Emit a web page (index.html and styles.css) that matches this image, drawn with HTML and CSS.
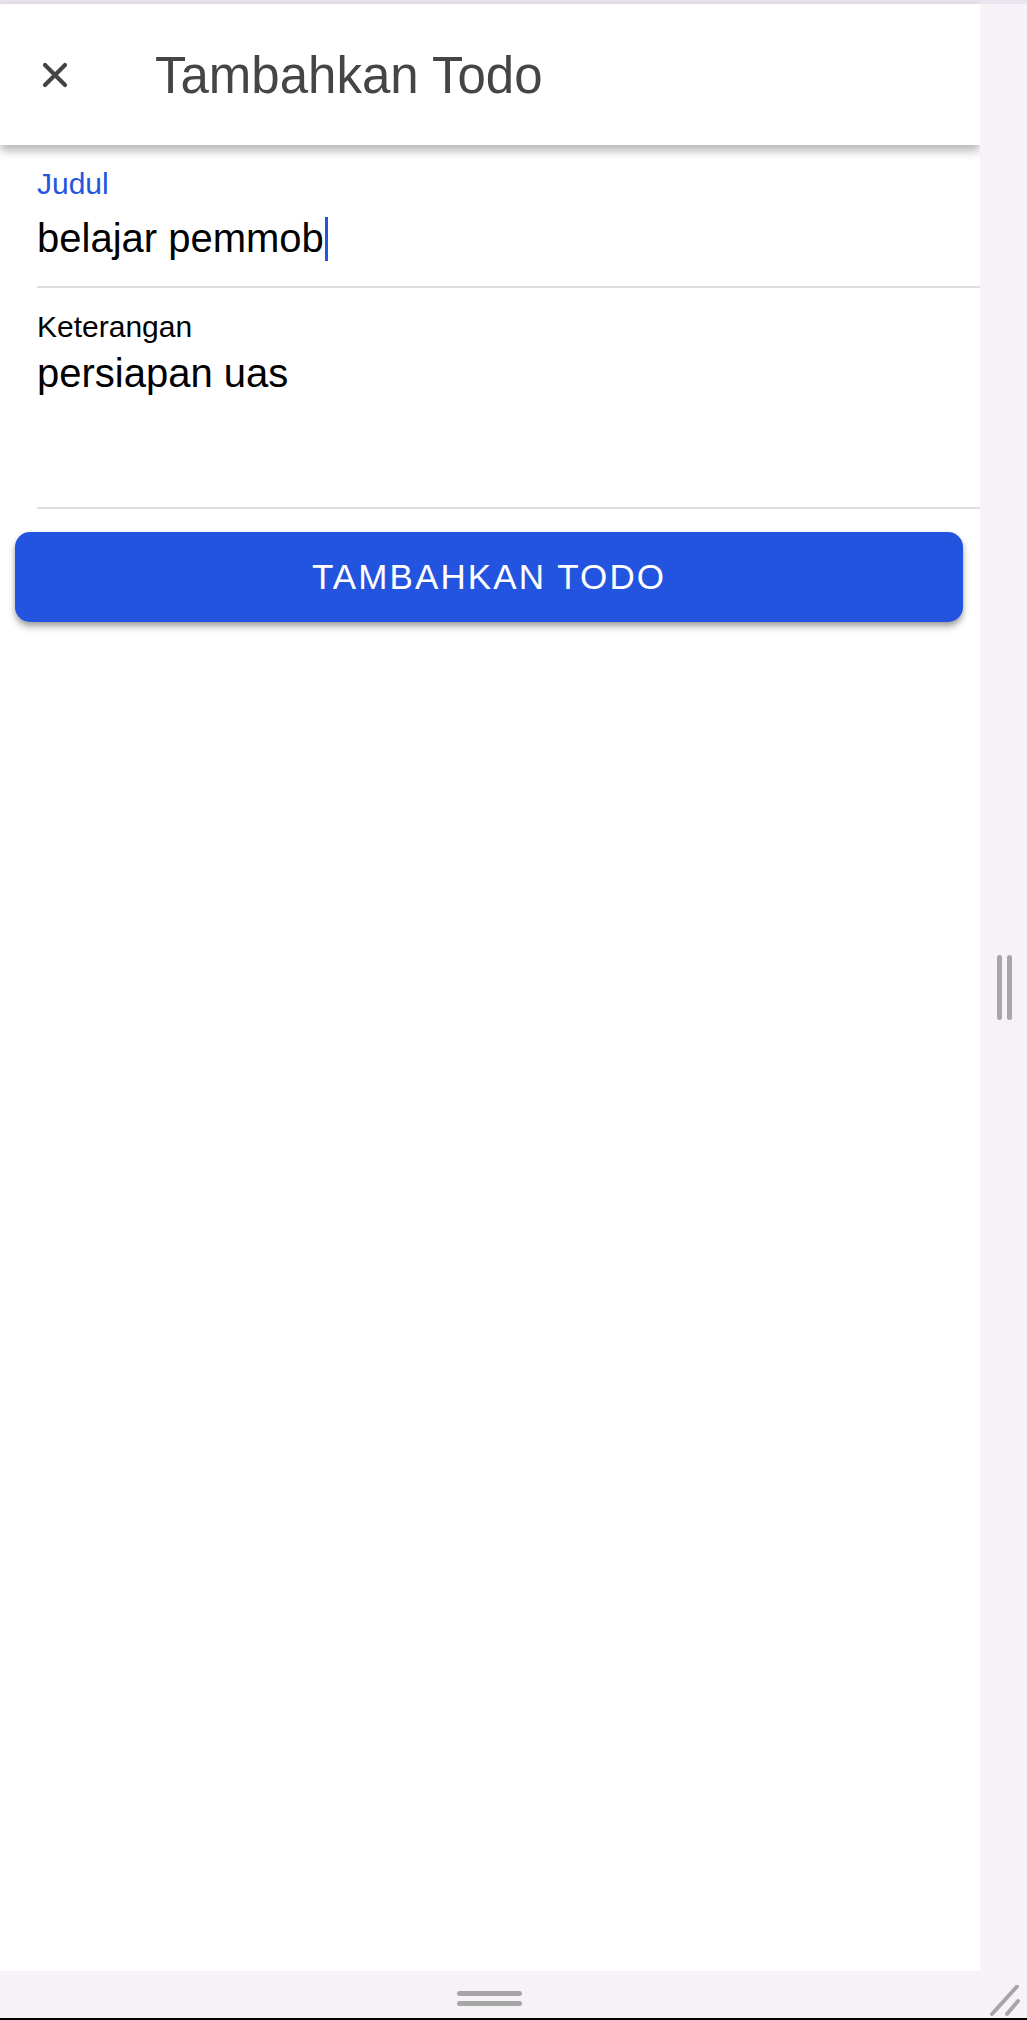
FILE: index.html
```html
<!DOCTYPE html>
<html lang="id">
<head>
<meta charset="utf-8">
<title>Tambahkan Todo</title>
<link rel="stylesheet" href="styles.css">
</head>
<body>
<div class="top-strip"></div>
<div class="row">
  <div class="app">
    <header class="appbar">
      <svg class="close" width="26" height="26" viewBox="0 0 26 26" aria-hidden="true">
        <path d="M3 3 L23 23 M23 3 L3 23" stroke="#444" stroke-width="4.2" stroke-linecap="round" fill="none"/>
      </svg>
      <h1 class="title">Tambahkan Todo</h1>
    </header>
    <form class="form">
      <div class="field field-title">
        <div class="label label-active">Judul</div>
        <div class="value">belajar pemmob<span class="cursor"></span></div>
      </div>
      <div class="divider"></div>
      <div class="field field-desc">
        <div class="label">Keterangan</div>
        <div class="value value-multi">persiapan uas</div>
      </div>
      <div class="divider"></div>
    </form>
    <div class="button">TAMBAHKAN TODO</div>
  </div>
  <div class="side">
    <div class="vhandle"><span></span><span></span></div>
  </div>
</div>
<div class="bottom">
  <div class="bottom-main">
    <div class="hhandle"><span></span><span></span></div>
  </div>
  <svg class="resize" width="32" height="32" viewBox="0 0 32 32" aria-hidden="true">
    <path d="M3 29 L28 1.5 M18 29 L29 16" stroke="#a6a6a6" stroke-width="4" stroke-linecap="round" fill="none"/>
  </svg>
</div>
<div class="bottom-line"></div>
</body>
</html>
```

FILE: styles.css
```css
html, body {
  margin: 0;
  padding: 0;
}
body {
  width: 1027px;
  height: 2020px;
  background: #f7f2f8;
  font-family: "Liberation Sans", Arial, sans-serif;
  overflow: hidden;
}
.top-strip {
  height: 4px;
  background: #e9e4ee;
}
.row {
  display: flex;
  height: 1967px;
}
.app {
  width: 980px;
  background: #ffffff;
  display: flex;
  flex-direction: column;
}
.appbar {
  height: 141px;
  flex: none;
  display: flex;
  align-items: center;
  background: #ffffff;
  box-shadow: 0 5px 10px rgba(0, 0, 0, 0.32);
  clip-path: inset(-4px 0 -30px 0);
  position: relative;
  z-index: 1;
}
.close {
  margin-left: 42px;
  flex: none;
}
.title {
  margin: 1px 0 0 87px;
  font-size: 51px;
  font-weight: 400;
  color: #454545;
  line-height: normal;
}
.form {
  padding-left: 37px;
  margin: 0;
}
.label {
  font-size: 30px;
  line-height: 34px;
  color: #000000;
}
.label-active {
  color: #2355e0;
}
.value {
  font-size: 40px;
  line-height: 45px;
  color: #000000;
  display: flex;
  align-items: center;
}
.cursor {
  display: inline-block;
  width: 3px;
  height: 44px;
  background: #2355e0;
  margin-left: 1px;
}
.field-title {
  padding-top: 22px;
  padding-bottom: 25px;
}
.field-title .value {
  margin-top: 15px;
}
.field-desc {
  padding-top: 22px;
}
.field-desc .value {
  margin-top: 7px;
  height: 156px;
  align-items: flex-start;
}
.divider {
  height: 2px;
  background: #dedede;
}
.button {
  margin: 23px 0 0 15px;
  width: 948px;
  height: 90px;
  border-radius: 15px;
  background: #2354e0;
  color: #ffffff;
  font-size: 35px;
  letter-spacing: 2.1px;
  display: flex;
  align-items: center;
  justify-content: center;
  box-shadow: 0 5px 7px rgba(0, 0, 0, 0.3), 0 2px 4px rgba(0, 0, 0, 0.12);
}
.side {
  flex: 1;
  display: flex;
  align-items: center;
  justify-content: center;
}
.vhandle {
  display: flex;
  gap: 5px;
  margin-left: 2px;
}
.vhandle span {
  display: block;
  width: 5px;
  height: 65px;
  border-radius: 3px;
  background: #a6a6a6;
}
.bottom {
  height: 47px;
  display: flex;
  align-items: center;
  background: #f7f2f8;
}
.bottom-main {
  width: 980px;
  display: flex;
  justify-content: center;
  margin-top: 8px;
}
.hhandle {
  display: flex;
  flex-direction: column;
  gap: 5px;
  margin-left: -1px;
}
.hhandle span {
  display: block;
  width: 65px;
  height: 5px;
  border-radius: 3px;
  background: #a6a6a6;
}
.resize {
  margin-left: 9px;
  margin-top: 12px;
}
.bottom-line {
  height: 2px;
  background: #000000;
}
```
